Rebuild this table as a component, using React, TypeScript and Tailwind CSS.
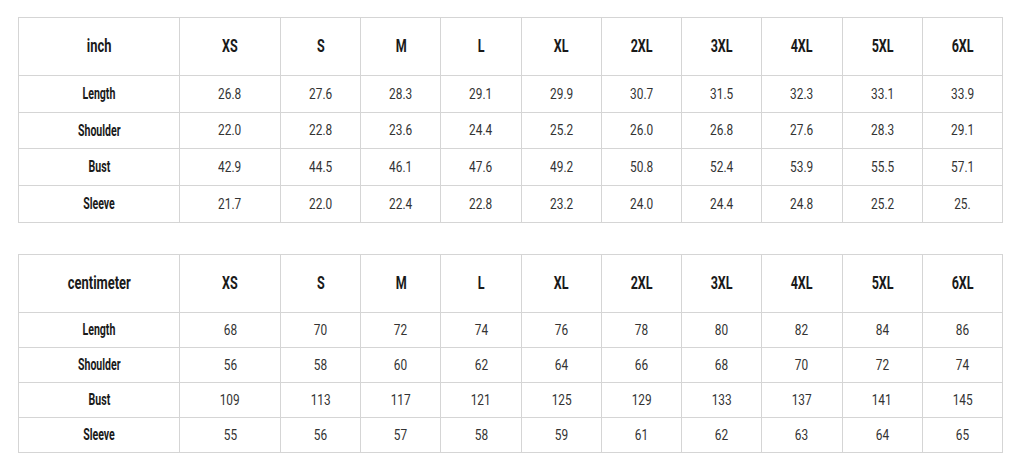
const SIZES = ['XS', 'S', 'M', 'L', 'XL', '2XL', '3XL', '4XL', '5XL', '6XL']

const INCH: [string, string[]][] = [
  ['Length', ['26.8', '27.6', '28.3', '29.1', '29.9', '30.7', '31.5', '32.3', '33.1', '33.9']],
  ['Shoulder', ['22.0', '22.8', '23.6', '24.4', '25.2', '26.0', '26.8', '27.6', '28.3', '29.1']],
  ['Bust', ['42.9', '44.5', '46.1', '47.6', '49.2', '50.8', '52.4', '53.9', '55.5', '57.1']],
  ['Sleeve', ['21.7', '22.0', '22.4', '22.8', '23.2', '24.0', '24.4', '24.8', '25.2', '25.']],
]

const CM: [string, string[]][] = [
  ['Length', ['68', '70', '72', '74', '76', '78', '80', '82', '84', '86']],
  ['Shoulder', ['56', '58', '60', '62', '64', '66', '68', '70', '72', '74']],
  ['Bust', ['109', '113', '117', '121', '125', '129', '133', '137', '141', '145']],
  ['Sleeve', ['55', '56', '57', '58', '59', '61', '62', '63', '64', '65']],
]

function SizeTable({ unit, rows, rowH }: { unit: string; rows: [string, string[]][]; rowH: string }) {
  return (
    <table className="border-collapse table-fixed w-[985px] text-center">
      <colgroup>
        <col className="w-[161px]" />
        <col className="w-[101px]" />
        {SIZES.slice(1).map((s) => (
          <col key={s} />
        ))}
      </colgroup>
      <thead>
        <tr className="h-[58px]">
          <th className="border border-[#d5d5d5] font-bold text-[19px] text-[#1a1a1a]">
            <span className="inline-block scale-x-[0.68]">{unit}</span>
          </th>
          {SIZES.map((s) => (
            <th key={s} className="border border-[#d5d5d5] font-bold text-[19px] text-[#1a1a1a]">
              <span className="inline-block scale-x-[0.66]">{s}</span>
            </th>
          ))}
        </tr>
      </thead>
      <tbody>
        {rows.map(([label, vals]) => (
          <tr key={label} className={rowH}>
            <td className="border border-[#d5d5d5] font-bold text-[16px] text-[#1a1a1a]">
              <span className="inline-block scale-x-[0.66]">{label}</span>
            </td>
            {vals.map((v, i) => (
              <td key={i} className="border border-[#d5d5d5] text-[15px] text-[#333]">
                <span className="inline-block scale-x-[0.79]">{v}</span>
              </td>
            ))}
          </tr>
        ))}
      </tbody>
    </table>
  )
}

export default function App() {
  return (
    <div className="w-[1024px] h-[466px] bg-white pl-[18px] pt-[17px] font-['Roboto',sans-serif] flex flex-col gap-[31px]">
      <SizeTable unit="inch" rows={INCH} rowH="h-[36.7px]" />
      <SizeTable unit="centimeter" rows={CM} rowH="h-[35px]" />
    </div>
  )
}
